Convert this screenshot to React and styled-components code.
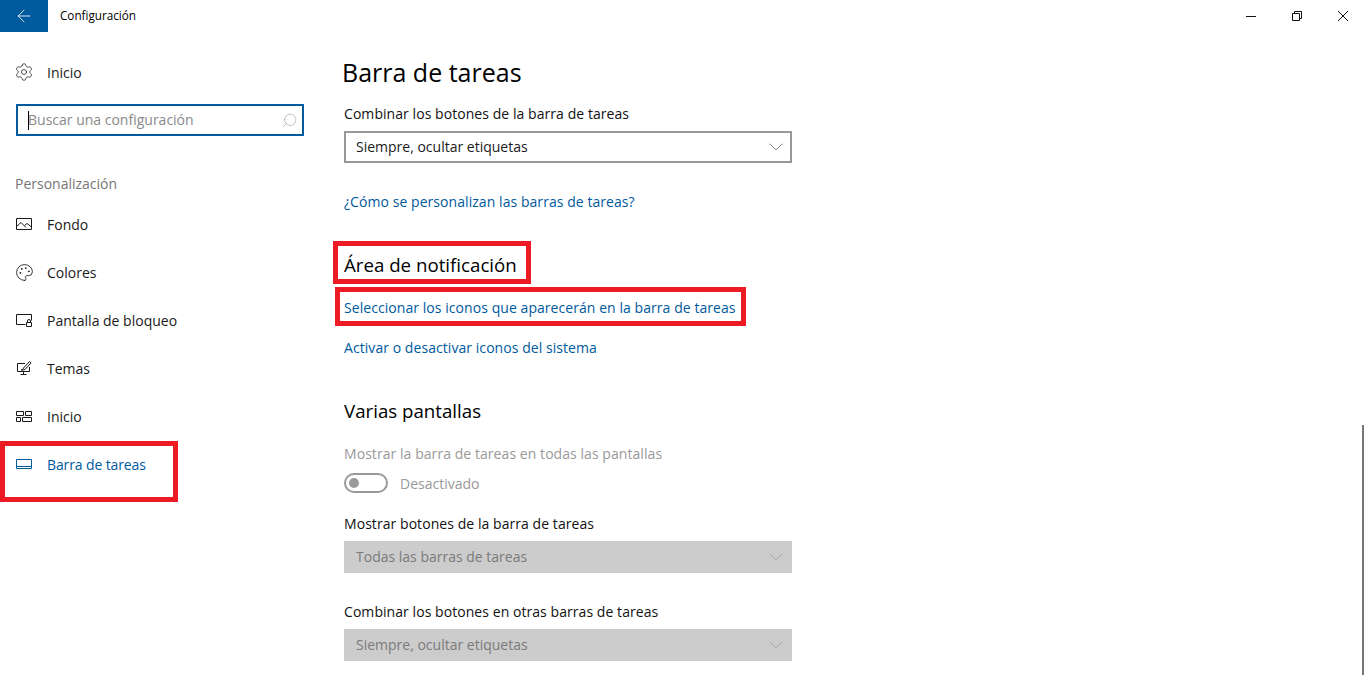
import React from 'react'
import styled, { createGlobalStyle } from 'styled-components'
import { Settings, Palette, Search, ArrowLeft, ChevronDown } from 'lucide-react'

const Global = createGlobalStyle`
    html, body {
        margin: 0;
        height: 100%;
        overflow: hidden;
        background: #fff;
    }
    body {
        font-family: "Open Sans", "Noto Sans", sans-serif;
        color: #000;
    }
    * {
        box-sizing: border-box;
    }
`

const ImageIcon = () => <svg width="16" height="16" viewBox="0 0 16 16" fill="none" stroke="currentColor">
    <path d="M.5 2.5h15v11H.5z" />
    <path d="M.5 10.5 5 6.5l5 5M8.5 9.5l2.5-2 4.5 3.5" />
</svg>

const LockIcon = () => <svg width="16" height="16" viewBox="0 0 16 16" fill="none" stroke="currentColor">
    <path d="M9.5 12.5H.5v-10h15v6" />
    <path d="M10.5 10.5h5v4h-5zM11.5 10.5V9a1.5 1.5 0 0 1 3 0v1.5" />
</svg>

const ThemeIcon = () => <svg width="16" height="16" viewBox="0 0 16 16" fill="none" stroke="currentColor">
    <path d="M9 3.500H1.500v8h12V7M7.500 11.500v3M4.500 14.500h6" />
    <path d="M5 10c1.500 0 2-.5 2.500-2l6-6.500 1.500 1.500-6 6.500c-1 .5-2.500 .5-4 .5z" />
</svg>

const TilesIcon = () => <svg width="16" height="16" viewBox="0 0 16 16" fill="none" stroke="currentColor">
    <path d="M.5 3.500h7v4h-7zM9.500 3.500h6v4h-6zM.5 9.500h4v4h-4zM6.500 9.500h9v4h-9z" />
</svg>

const TaskbarIcon = () => <svg width="16" height="16" viewBox="0 0 16 16" fill="none" stroke="currentColor">
    <path d="M.5 3.500h15v9H.5zM.5 10.500h15" />
</svg>

const MinimizeIcon = () => <svg width="10" height="10" viewBox="0 0 10 10" fill="none" stroke="currentColor">
    <path d="M0 5.500h10" />
</svg>

const RestoreIcon = () => <svg width="10" height="10" viewBox="0 0 10 10" fill="none" stroke="currentColor">
    <path d="M.5 2.500h7v7h-7zM2.500 2.500v-2h7v7h-2" />
</svg>

const CloseIcon = () => <svg width="10" height="10" viewBox="0 0 10 10" fill="none" stroke="currentColor">
    <path d="M0 0l10 10M10 0 0 10" />
</svg>

const navItems = [
    { label: 'Fondo', icon: <ImageIcon /> },
    { label: 'Colores', icon: <Palette size={19} strokeWidth={1.1} /> },
    { label: 'Pantalla de bloqueo', icon: <LockIcon /> },
    { label: 'Temas', icon: <ThemeIcon /> },
    { label: 'Inicio', icon: <TilesIcon /> },
    { label: 'Barra de tareas', icon: <TaskbarIcon />, active: true },
]

const Select = ({ value, disabled }) => <SelectBox $disabled={disabled}>
    <SelectValue>{value}</SelectValue>
    <ChevronDown size={24} strokeWidth={0.9} />
</SelectBox>

const App = () => {
    return <Window>
        <Global />
        <TitleBar>
            <BackButton><ArrowLeft size={20} strokeWidth={1} /></BackButton>
            <AppTitle>Configuración</AppTitle>
            <WindowControls>
                <ControlButton><MinimizeIcon /></ControlButton>
                <ControlButton><RestoreIcon /></ControlButton>
                <ControlButton><CloseIcon /></ControlButton>
            </WindowControls>
        </TitleBar>
        <Body>
            <Sidebar>
                <NavRow>
                    <NavIcon><Settings size={20} strokeWidth={0.9} /></NavIcon>
                    Inicio
                </NavRow>
                <SearchBox>
                    <Caret />
                    <SearchText>Buscar una configuración</SearchText>
                    <Search size={17} strokeWidth={0.9} color="#a0a0a0" transform="scale(-1 1)" />
                </SearchBox>
                <GroupLabel>Personalización</GroupLabel>
                {navItems.map(item => <NavRow key={item.label} $active={item.active}>
                    <NavIcon>{item.icon}</NavIcon>
                    {item.label}
                </NavRow>)}
                <SideHighlight />
            </Sidebar>
            <Main>
                <PageTitle>Barra de tareas</PageTitle>
                <FieldLabel>Combinar los botones de la barra de tareas</FieldLabel>
                <Select value="Siempre, ocultar etiquetas" />
                <HelpLink>¿Cómo se personalizan las barras de tareas?</HelpLink>
                <SectionTitle $top={39}>
                    Área de notificación
                    <TitleHighlight />
                </SectionTitle>
                <SectionLink $top={19}>
                    Seleccionar los iconos que aparecerán en la barra de tareas
                    <LinkHighlight />
                </SectionLink>
                <SectionLink $top={20}>Activar o desactivar iconos del sistema</SectionLink>
                <SectionTitle $top={39}>Varias pantallas</SectionTitle>
                <FieldLabel $disabled $top={19}>Mostrar la barra de tareas en todas las pantallas</FieldLabel>
                <ToggleRow>
                    <Toggle><ToggleKnob /></Toggle>
                    Desactivado
                </ToggleRow>
                <FieldLabel $top={21}>Mostrar botones de la barra de tareas</FieldLabel>
                <Select value="Todas las barras de tareas" disabled />
                <FieldLabel $top={29}>Combinar los botones en otras barras de tareas</FieldLabel>
                <Select value="Siempre, ocultar etiquetas" disabled />
            </Main>
        </Body>
        <ScrollThumb />
    </Window>
}

const Window = styled.div`
    position: relative;
    width: 1366px;
    height: 675px;
    overflow: hidden;
    background: #fff;
`

const TitleBar = styled.div`
    display: flex;
    align-items: center;
    height: 32px;
`

const BackButton = styled.div`
    display: flex;
    align-items: center;
    justify-content: center;
    width: 48px;
    height: 32px;
    background: #005a9e;
    color: #fff;
`

const AppTitle = styled.div`
    margin-left: 12px;
    padding-bottom: 2px;
    font-size: 11.7px;
`

const WindowControls = styled.div`
    display: flex;
    margin-left: auto;
`

const ControlButton = styled.div`
    display: flex;
    align-items: center;
    justify-content: center;
    width: 46px;
    height: 32px;
    color: #111;
`

const Body = styled.div`
    display: flex;
`

const Sidebar = styled.div`
    position: relative;
    width: 344px;
    padding-top: 16px;
`

const NavRow = styled.div`
    display: flex;
    align-items: center;
    height: 48px;
    padding-left: 16px;
    font-size: 14px;
    letter-spacing: ${p => p.$active ? '-0.12px' : '0'};
    color: ${p => p.$active ? '#005a9e' : '#1a1a1a'};
`

const NavIcon = styled.div`
    display: flex;
    justify-content: center;
    width: 16px;
    margin-right: 15px;

    svg {
        flex-shrink: 0;
    }
`

const SearchBox = styled.div`
    display: flex;
    align-items: center;
    width: 288px;
    height: 32px;
    margin: 8px 0 0 16px;
    padding: 0 4px 0 10px;
    border: 2px solid #005a9e;
`

const Caret = styled.div`
    width: 1px;
    height: 19px;
    margin-right: -1px;
    background: #000;
`

const SearchText = styled.div`
    flex: 1;
    padding-bottom: 2px;
    font-size: 14px;
    color: #8a8a8a;
`

const GroupLabel = styled.div`
    margin: 38px 0 6px 15px;
    height: 20px;
    line-height: 20px;
    font-size: 14px;
    color: #767676;
`

const SideHighlight = styled.div`
    position: absolute;
    left: 0;
    top: 409px;
    width: 178px;
    height: 61px;
    border: 5px solid #ed1c24;
`

const Main = styled.div`
    display: flex;
    flex-direction: column;
    align-items: flex-start;
    padding-top: 20px;
`

const PageTitle = styled.div`
    margin-left: -2px;
    height: 40px;
    line-height: 40px;
    font-size: 25px;
`

const FieldLabel = styled.div`
    margin-top: ${p => p.$top ?? 12}px;
    height: 20px;
    line-height: 20px;
    font-size: 14px;
    letter-spacing: 0.06px;
    color: ${p => p.$disabled ? '#999' : '#111'};
`

const SelectBox = styled.div`
    display: flex;
    align-items: center;
    justify-content: space-between;
    width: 448px;
    height: 32px;
    margin-top: 7px;
    padding: 0 2px 0 10px;
    font-size: 14px;
    border: 2px solid ${p => p.$disabled ? '#ccc' : '#999'};
    background: ${p => p.$disabled ? '#ccc' : '#fff'};
    color: ${p => p.$disabled ? '#7a7a7a' : '#1a1a1a'};

    svg {
        color: ${p => p.$disabled ? '#a0a0a0' : '#777'};
    }
`

const SelectValue = styled.span`
    padding-bottom: 2px;
`

const HelpLink = styled.div`
    margin-top: 29px;
    height: 20px;
    line-height: 20px;
    font-size: 14px;
    letter-spacing: 0.06px;
    color: #005a9e;
`

const SectionTitle = styled.div`
    position: relative;
    margin-top: ${p => p.$top}px;
    height: 28px;
    line-height: 28px;
    font-size: 18.7px;
`

const SectionLink = styled.div`
    position: relative;
    margin-top: ${p => p.$top}px;
    height: 20px;
    line-height: 20px;
    font-size: 14px;
    letter-spacing: 0.06px;
    color: #005a9e;
`

const TitleHighlight = styled.div`
    position: absolute;
    left: -11px;
    top: -10px;
    width: 198px;
    height: 43px;
    border: 5px solid #ed1c24;
`

const LinkHighlight = styled.div`
    position: absolute;
    left: -9px;
    top: -11px;
    width: 411px;
    height: 39px;
    border: 5px solid #ed1c24;
`

const ToggleRow = styled.div`
    display: flex;
    align-items: center;
    gap: 12px;
    height: 20px;
    margin-top: 9px;
    font-size: 14px;
    color: #999;
`

const Toggle = styled.div`
    display: flex;
    align-items: center;
    width: 44px;
    height: 20px;
    padding-left: 3px;
    border: 2px solid #999;
    border-radius: 10px;
`

const ToggleKnob = styled.div`
    width: 10px;
    height: 10px;
    border-radius: 50%;
    background: #999;
`

const ScrollThumb = styled.div`
    position: absolute;
    right: 2px;
    top: 425px;
    width: 2px;
    height: 250px;
    background: #767676;
`

export default App
